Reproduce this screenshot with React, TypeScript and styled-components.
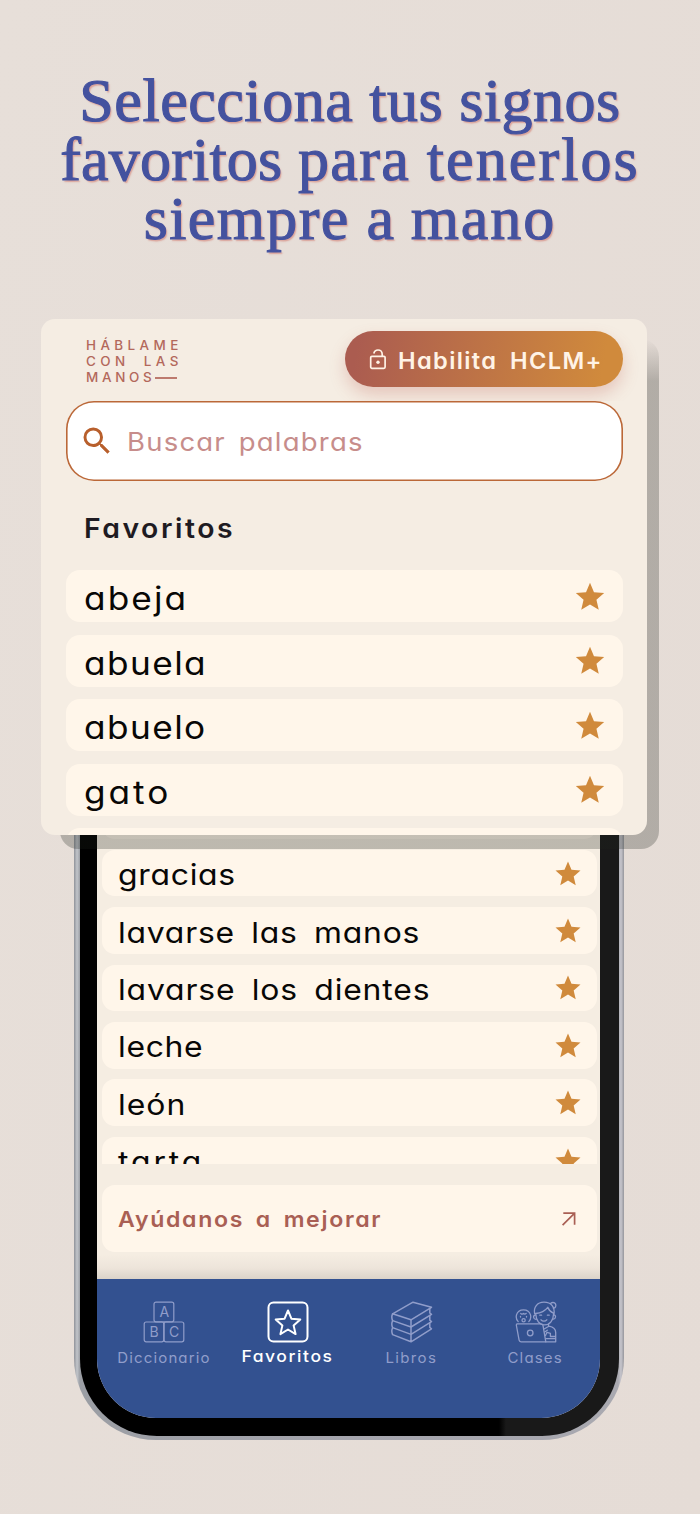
import React from "react";
import styled, { createGlobalStyle } from "styled-components";
import { MdSearch, MdStar } from "react-icons/md";

const GlobalStyle = createGlobalStyle`
  *, *::before, *::after { box-sizing: border-box; }
  body {
    margin: 0;
    background: #e6ded8;
    font-family: Inter, "Liberation Sans", sans-serif;
    font-feature-settings: "cv11";
  }
`;

const Page = styled.main`
  width: 700px;
  height: 1514px;
  padding-top: 70.5px;
  overflow: hidden;
  background: linear-gradient(100deg, #e7dfd9, #e5dcd6);
`;

const Headline = styled.h1`
  margin: 0;
  display: flex;
  flex-direction: column;
  align-items: center;
  font: 400 62px/59px "Liberation Serif", serif;
  color: #44529f;
  -webkit-text-stroke: 1.1px #44529f;
  text-shadow: 1.5px 2px 1.5px rgba(214, 140, 130, 0.75);
`;

const HeadlineRow = styled.span`
  white-space: nowrap;
`;

const HeadlineWord = styled.span<{ $track: number }>`
  letter-spacing: ${(p) => p.$track}px;
`;

/* Wide rounded lettering shared by every label of the app. */
const Label = styled.span<{
  $size: number;
  $track: number;
  $word?: number;
  $stretch?: number;
  $weight?: number;
  $color?: string;
  $drop?: number;
}>`
  display: block;
  font-size: ${(p) => p.$size}px;
  font-weight: ${(p) => p.$weight ?? 400};
  letter-spacing: ${(p) => p.$track}px;
  word-spacing: ${(p) => p.$word ?? 0}px;
  color: ${(p) => p.$color ?? "#080706"};
  transform: translateY(${(p) => p.$drop ?? 0}px) scaleX(${(p) => p.$stretch ?? 1.1});
  transform-origin: left center;
  white-space: nowrap;
  line-height: 1.2;
`;

const CardLayer = styled.section`
  position: relative;
  z-index: 1;
  width: 606px;
  height: 516px;
  margin: 71.5px 0 0 41px;

  &::before {
    content: "";
    position: absolute;
    inset: 20px -11.5px -14px 19px;
    border-radius: 18px;
    background: linear-gradient(rgba(30, 35, 28, 0), rgba(30, 35, 28, 0.26) 42px);
  }
`;

const Card = styled.div`
  position: relative;
  height: 100%;
  padding: 0 24px 0 25px;
  border-radius: 14px;
  background: #f5ede3;
  overflow: hidden;
`;

const CardHeader = styled.header`
  display: flex;
  justify-content: space-between;
  height: 82px;
  margin: 0 -24px 0 -25px;
  padding: 12px 24px 0 44.7px;
  overflow: hidden;
`;

const Brand = styled.div`
  padding-top: 7px;

  & > span {
    line-height: 15.7px;
  }
`;

const BrandEnd = styled.div`
  display: flex;
  align-items: center;
`;

const BrandDash = styled.i`
  width: 22px;
  height: 2px;
  margin: 2px 0 0 3.5px;
  background: #bd7a6e;
`;

const UpgradeButton = styled.button`
  display: flex;
  align-items: center;
  gap: 11px;
  width: 278px;
  height: 56px;
  padding: 1px 0 0 24px;
  border: 0;
  border-radius: 28px;
  background: linear-gradient(100deg, #ab5c50 5%, #d08a3c 92%);
  box-shadow: 0 8px 16px rgba(190, 95, 85, 0.27);
  font-family: inherit;
  font-feature-settings: inherit;
`;

const SearchBox = styled.div`
  display: flex;
  align-items: center;
  gap: 12px;
  height: 80px;
  padding-left: 13px;
  border-radius: 28px;
  background: #fff;
  box-shadow: inset 0 0 0 1.6px #bb6838;
  color: #b85f2c;
`;

const SectionTitle = styled.div`
  height: 89px;
  padding: 30px 0 0 18px;
`;

const CardList = styled.div`
  display: flex;
  flex-direction: column;
  gap: 12.6px;
`;

const WordRow = styled.div<{ $compact?: boolean }>`
  display: flex;
  flex: none;
  align-items: center;
  justify-content: space-between;
  height: ${(p) => (p.$compact ? 46.5 : 52)}px;
  padding: ${(p) => (p.$compact ? "1px 14px 0 16px" : "1px 16px 0 18px")};
  border-radius: ${(p) => (p.$compact ? 13 : 14)}px;
  background: #fff6ea;
  color: #d08a3c;
`;

const Phone = styled.div`
  width: 550px;
  height: 660px;
  margin: -55px 0 0 74px;
  padding: 0 5.5px 4px 5.5px;
  border-radius: 0 0 82px 82px;
  background: linear-gradient(90deg, #8f9299 0, #c2c5ca 3px, #9b9ea4 6px, #a5a5ad 50%, #a9a9b0 544px, #c6c5cc 547px, #96969c 550px);
`;

const Bezel = styled.div`
  height: 100%;
  padding: 0 18.5px 18px 17.5px;
  border-radius: 0 0 77px 77px;
  background: linear-gradient(90deg, #000 419px, #191919 426px);
`;

const Screen = styled.div`
  display: flex;
  flex-direction: column;
  height: 100%;
  border-radius: 0 0 59px 59px;
  background: #f5ede2;
  overflow: hidden;
`;

const PhoneList = styled.div`
  display: flex;
  flex-direction: column;
  gap: 10.9px;
  height: 383.5px;
  padding: 12.5px 3px 0 5px;
  overflow: hidden;
`;

const HelpRow = styled.div`
  display: flex;
  flex: none;
  align-items: center;
  justify-content: space-between;
  height: 67px;
  margin: 21.5px 3px 0 5px;
  padding: 0 19px 0 16px;
  border-radius: 13px;
  background: #fff6ea;
`;

const NavShade = styled.div`
  flex: none;
  height: 26.5px;
  background: linear-gradient(rgba(221, 213, 203, 0) 10%, #ede4da 60%, #dbd3c9);
`;

const NavBar = styled.nav`
  display: grid;
  grid-template-columns: repeat(4, 124px);
  flex: 1;
  padding: 22px 0 0 4.5px;
  background: #335190;
`;

const NavItem = styled.div<{ $active?: boolean }>`
  display: flex;
  flex-direction: column;
  align-items: center;
  gap: ${(p) => (p.$active ? 4 : 6.2)}px;
  color: ${(p) => (p.$active ? "#fff" : "#909dca")};

  & > span {
    transform-origin: center;
  }
`;

const LockIcon = () => (
  <svg width="18" height="22" viewBox="0 0 18 22" fill="none" stroke="#fff3e6" strokeWidth="1.7">
    <rect x="1.7" y="7.3" width="14.4" height="12" rx="1.2" />
    <path d="M4.8 4.5C5.4 2.2 7 1 9 1c2.4 0 4.2 1.800 4.200 4.200v2" />
    <circle cx="9" cy="13.3" r="1.700" fill="#fff3e6" stroke="none" />
  </svg>
);

const ArrowIcon = () => (
  <svg width="18" height="18" viewBox="0 0 18 18" fill="none" stroke="#a95f54" strokeWidth="1.700">
    <path d="M3.300 3.200h11.300v11.600M14.400 3.400 2.600 15.200" />
  </svg>
);

const NavSvg = ({ children, w = 1.2 }: { children: React.ReactNode; w?: number }) => (
  <svg width="42" height="42" viewBox="0 0 42 42" fill="none" stroke="currentColor" strokeWidth={w} strokeLinejoin="round" strokeLinecap="round">
    {children}
  </svg>
);

const BlockLetter = styled.text`
  font: 400 14px Inter, sans-serif;
  fill: currentColor;
  stroke: none;
  text-anchor: middle;
`;

const BlocksIcon = () => (
  <NavSvg>
    <rect x="11" y="1.200" width="19.800" height="19.600" rx="2" />
    <rect x="1.200" y="21" width="19.600" height="19.800" rx="2" />
    <rect x="21" y="21" width="19.800" height="19.800" rx="2" />
    <BlockLetter x="21.300" y="16.200">A</BlockLetter>
    <BlockLetter x="11" y="36">B</BlockLetter>
    <BlockLetter x="31" y="36">C</BlockLetter>
  </NavSvg>
);

const FavoriteIcon = () => (
  <NavSvg w={2}>
    <rect x="1.500" y="1.500" width="39" height="39" rx="5" />
    <path d="M21 9.500l3.400 8.200 8.900.8-6.700 5.900 2 8.700-7.600-4.600-7.600 4.600 2-8.700-6.700-5.900 8.900-.8z" />
  </NavSvg>
);

const BooksIcon = () => (
  <NavSvg w={1.5}>
    <path d="M22 1.200 40.500 6.300 20 18.800 1.600 12.800z" />
    <path d="M1.600 12.800c-.9 1.800-.9 4.800 0 6.800L20 26 40.500 13.400 38.800 12V7.600" />
    <path d="M1.600 19.800c-.9 1.800-.9 4.800 0 6.800L20 33.400 40.500 20.600l-1.700-1.400v-4.600" />
    <path d="M1.600 26.800c-.9 1.800-.9 4.800 0 6.800L20 40.800 40.500 27.800l-1.700-1.400v-4.600M20 18.800v22" />
  </NavSvg>
);

const ClassIcon = () => (
  <NavSvg w={1.3}>
    <path d="M1.900 22.800h24.200a2 2 0 0 1 1.900 1.500l2.800 16.500H6a2 2 0 0 1-1.900-1.600L1.300 24z" />
    <circle cx="15.200" cy="32" r="2.800" />
    <path d="M3.200 20.600C1.300 18.800 1 16 1.500 13.900 2.300 10.900 5 8.800 8.500 8.800s6.200 2.100 7 5.100c.5 2.100.2 4.900-1.700 6.700M5.800 12.400c1 .9 1.900.9 2.700 0 .8.900 1.800.9 2.700 0M5.500 15.500v.6M11.500 15.500v.6" />
    <circle cx="8.600" cy="19.200" r="1.600" />
    <path d="M19.600 12.500C18.500 6.500 22 1.200 29 1.200c7.500 0 11 5 10 12M20.600 12.500c5.500-.6 9.600-2.800 12.200-6.200 1 2.800 3 4.800 5.600 5.800M20.800 13c.2 6.400 3.600 10.800 8.800 10.800s8.800-4.200 9-11" />
    <path d="M35.500 2.600c.6-1.200 4-1.800 5 .3 1 2.200-.2 4.200-2.100 4.300M20.400 14c-2.600.2-2.400 4.200.6 4.400M38.800 13.800c2.600.2 2.200 4.200-.6 4.400" />
    <path d="M26 18.800c1.500 1.800 4.300 1.800 5.800 0M24.800 14.200h1.800M32.400 14.200h1.800" />
    <path d="M29.500 27.800l4-2.300v-2.300M34 25.200c4.400.8 6.700 2.600 6.700 6.400v9.200H30.800M30.500 34.500l1.500-3.200 3.400 1v3.200h4.400M31 37.600h9.500M29.700 31l2.600-1.800" />
  </NavSvg>
);

const headline: [string, number][][] = [
  [["Selecciona ", 0.55], ["tus ", 0.5], ["signos", 0.5]],
  [["favoritos ", 0.2], ["para ", 1.3], ["tenerlos", 2.1]],
  [["siempre ", 1.4], ["a ", 0.5], ["mano", 2]],
];

const featured = [
  { word: "abeja", track: 1.9 },
  { word: "abuela", track: 1.3 },
  { word: "abuelo", track: 1.3 },
  { word: "gato", track: 2.7 },
];

const words = [
  { word: "gracias", track: 0.65 },
  { word: "lavarse las manos", track: 0.7 },
  { word: "lavarse los dientes", track: 0.75 },
  { word: "leche", track: 0.6 },
  { word: "león", track: 0.9 },
  { word: "tarta", track: 2.6 },
];

const brandColor = "#b3685b";

export default function App() {
  return (
    <>
      <GlobalStyle />
      <Page>
        <Headline>
          {headline.map((row, i) => (
            <HeadlineRow key={i}>
              {row.map(([text, track]) => (
                <HeadlineWord key={text} $track={track}>{text}</HeadlineWord>
              ))}
            </HeadlineRow>
          ))}
        </Headline>

        <CardLayer>
          <Card>
            <CardHeader>
              <Brand>
                <Label $size={12.8} $track={4.2} $stretch={1.05} $weight={500} $color={brandColor}>HÁBLAME</Label>
                <Label $size={12.8} $track={4.2} $word={6} $stretch={1.05} $weight={500} $color={brandColor}>CON LAS</Label>
                <BrandEnd>
                  <Label $size={12.8} $track={3.5} $stretch={1.05} $weight={500} $color={brandColor} $drop={0.5}>MANOS</Label>
                  <BrandDash />
                </BrandEnd>
              </Brand>
              <UpgradeButton>
                <LockIcon />
                <Label $size={22.5} $track={1.3} $word={5} $stretch={1.05} $weight={600} $color="#fff3e6" $drop={1}>Habilita HCLM+</Label>
              </UpgradeButton>
            </CardHeader>

            <SearchBox>
              <MdSearch size={36} />
              <Label $size={25} $track={1.1} $word={3.5} $color="#c78d8b" $drop={1}>Buscar palabras</Label>
            </SearchBox>

            <SectionTitle>
              <Label $size={27} $track={2.4} $stretch={1.05} $weight={600} $color="#1e1b22" $drop={1.5}>Favoritos</Label>
            </SectionTitle>

            <CardList>
              {featured.map((f) => (
                <WordRow key={f.word}>
                  <Label $size={32} $track={f.track} $drop={2.5}>{f.word}</Label>
                  <MdStar size={34} />
                </WordRow>
              ))}
              <WordRow />
            </CardList>
          </Card>
        </CardLayer>

        <Phone>
          <Bezel>
            <Screen>
              <PhoneList>
                <WordRow $compact />
                {words.map((w) => (
                  <WordRow key={w.word} $compact>
                    <Label $size={29} $track={w.track} $word={6} $drop={2.4}>{w.word}</Label>
                    <MdStar size={30} />
                  </WordRow>
                ))}
              </PhoneList>
              <HelpRow>
                <Label $size={22} $track={1.6} $word={4} $stretch={1.05} $weight={600} $color="#a95f54" $drop={0.7}>Ayúdanos a mejorar</Label>
                <ArrowIcon />
              </HelpRow>
              <NavShade />
              <NavBar>
                <NavItem>
                  <BlocksIcon />
                  <Label $size={14.2} $track={1.05} $stretch={1.06} $color="#909dca">Diccionario</Label>
                </NavItem>
                <NavItem $active>
                  <FavoriteIcon />
                  <Label $size={16.5} $track={1.5} $stretch={1.06} $weight={500} $color="#fff">Favoritos</Label>
                </NavItem>
                <NavItem>
                  <BooksIcon />
                  <Label $size={14.2} $track={1.25} $stretch={1.06} $color="#909dca">Libros</Label>
                </NavItem>
                <NavItem>
                  <ClassIcon />
                  <Label $size={14.2} $track={1.1} $stretch={1.06} $color="#909dca">Clases</Label>
                </NavItem>
              </NavBar>
            </Screen>
          </Bezel>
        </Phone>
      </Page>
    </>
  );
}
